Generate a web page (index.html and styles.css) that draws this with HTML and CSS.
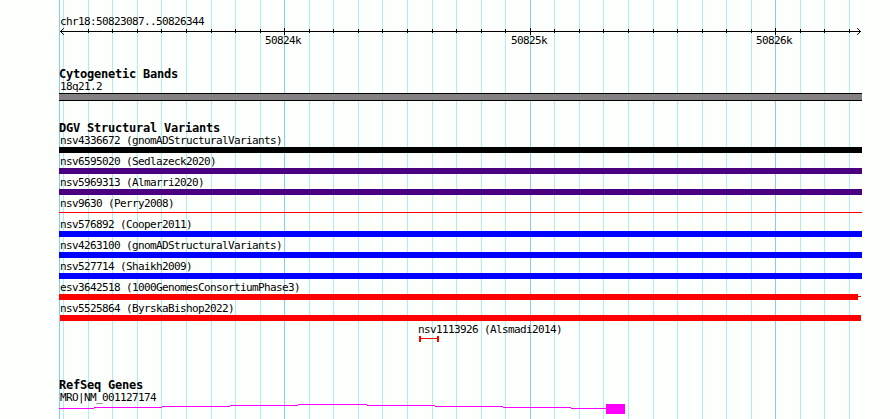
FILE: index.html
```html
<!DOCTYPE html>
<html lang="en">
<head>
<meta charset="utf-8">
<title>chr18:50823087..50826344</title>
<link rel="stylesheet" href="styles.css">
</head>
<body>
<svg class="grid" width="890" height="419" aria-hidden="true">
  <path class="minor" d="M63.5 0V419M88.5 0V419M112.5 0V419M137.5 0V419M161.5 0V419M186.5 0V419M211.5 0V419M235.5 0V419M260.5 0V419M309.5 0V419M333.5 0V419M358.5 0V419M382.5 0V419M407.5 0V419M432.5 0V419M456.5 0V419M481.5 0V419M505.5 0V419M554.5 0V419M579.5 0V419M603.5 0V419M628.5 0V419M653.5 0V419M677.5 0V419M702.5 0V419M726.5 0V419M751.5 0V419M800.5 0V419M824.5 0V419M849.5 0V419"/>
  <path class="major" d="M59.5 0V419M284.5 0V419M530.5 0V419M775.5 0V419"/>
</svg>
<main class="browser">
  <header class="ruler">
    <div class="label">chr18:50823087..50826344</div>
    <svg class="axis" width="803" height="20" viewBox="59 28 803 20">
      <path d="M60 31.5H861M88.5 29V33M112.5 29V33M137.5 29V33M161.5 29V33M186.5 29V33M211.5 29V33M235.5 29V33M260.5 29V33M284.5 28V35M309.5 29V33M333.5 29V33M358.5 29V33M382.5 29V33M407.5 29V33M432.5 29V33M456.5 29V33M481.5 29V33M505.5 29V33M530.5 28V35M554.5 29V33M579.5 29V33M603.5 29V33M628.5 29V33M653.5 29V33M677.5 29V33M702.5 29V33M726.5 29V33M751.5 29V33M775.5 28V35M800.5 29V33M824.5 29V33M849.5 29V33"/>
      <path class="arrow" d="M63.8 28.2L60.5 31.5L63.8 34.8M857.2 28.2L860.5 31.5L857.2 34.8"/>
      <text x="265" y="44">50824k</text>
      <text x="511" y="44">50825k</text>
      <text x="756" y="44">50826k</text>
    </svg>
  </header>

  <section class="track cytobands">
    <h2>Cytogenetic Bands</h2>
    <div class="label">18q21.2</div>
    <div class="band"></div>
  </section>

  <section class="track variants">
    <h2>DGV Structural Variants</h2>
    <div class="feature"><div class="label">nsv4336672 (gnomADStructuralVariants)</div><div class="bar black"></div></div>
    <div class="feature"><div class="label">nsv6595020 (Sedlazeck2020)</div><div class="bar indigo"></div></div>
    <div class="feature"><div class="label">nsv5969313 (Almarri2020)</div><div class="bar indigo"></div></div>
    <div class="feature"><div class="label">nsv9630 (Perry2008)</div><div class="bar thin"></div></div>
    <div class="feature"><div class="label">nsv576892 (Cooper2011)</div><div class="bar blue"></div></div>
    <div class="feature"><div class="label">nsv4263100 (gnomADStructuralVariants)</div><div class="bar blue"></div></div>
    <div class="feature"><div class="label">nsv527714 (Shaikh2009)</div><div class="bar blue"></div></div>
    <div class="feature"><div class="label">esv3642518 (1000GenomesConsortiumPhase3)</div><div class="whiskered"><div class="bar red"></div><div class="whisker"></div></div></div>
    <div class="feature"><div class="label">nsv5525864 (ByrskaBishop2022)</div><div class="bar red inset"></div></div>
    <div class="feature short">
      <div class="label">nsv1113926 (Alsmadi2014)</div>
      <div class="span"></div>
    </div>
  </section>

  <section class="track genes">
    <h2>RefSeq Genes</h2>
    <div class="label">MRO|NM_001127174</div>
    <svg class="transcript" width="803" height="15" viewBox="59 404 803 15">
      <path d="M59 408.5H94M94 407.5H162M162 406.5H230M230 405.5H298M298 404.5H367M367 405.5H435M435 406.5H503M503 407.5H571M571 408.5H606"/>
      <rect x="606" y="404" width="19" height="10"/>
    </svg>
  </section>
</main>
</body>
</html>
```
FILE: styles.css
```css
body {
  margin: 0;
  height: 419px;
  overflow: hidden;
  background: #fdfffc;
  color: #000;
  font: 11px/13px "DejaVu Sans Mono", monospace;
}

.grid {
  position: absolute;
  top: 0;
  left: 0;
  z-index: -1;
  shape-rendering: crispEdges;
}
.grid .minor { stroke: #afeeee; }
.grid .major { stroke: #87ceeb; }

svg { display: block; }

.browser {
  width: 803px;
  padding: 15px 0 0 59px;
}

.label,
.axis text {
  letter-spacing: -0.622px;
  white-space: pre;
}
.label {
  height: 13px;
  padding-left: 1px;
}

.ruler { height: 53px; }
.axis path { stroke: #000; fill: none; shape-rendering: crispEdges; }
.axis .arrow { shape-rendering: auto; }

.track h2 {
  margin: 0;
  height: 12px;
  font-size: 12px;
  line-height: 12px;
  letter-spacing: -0.224px;
  white-space: pre;
}

.cytobands { height: 54px; }
.band {
  height: 6px;
  border: solid #000;
  border-width: 1px 0;
  background: #848084;
}

.variants { height: 257px; }
.feature { height: 21px; }
.bar { height: 6px; }
.black { background: #000; }
.indigo { background: #4b0082; }
.blue { background: #00f; }
.red { background: #f00; }
.thin { height: 1px; margin-top: 2px; background: #f00; }
.thin { position: relative; top: 0; }
.inset { margin: 0 1px; }

.whiskered { display: flex; align-items: flex-start; }
.whiskered .bar { width: 799px; }
.whisker { width: 3px; height: 1px; margin-top: 2px; background: #f00; }

.short { padding-left: 358px; }
.span {
  width: 16px;
  height: 6px;
  margin-left: 2px;
  border: solid #f00;
  border-width: 0 2px;
  background: linear-gradient(#f00, #f00) 0 2px / 100% 1px no-repeat;
}

.transcript path { stroke: #f0f; shape-rendering: crispEdges; }
.transcript rect { fill: #f0f; }
```
